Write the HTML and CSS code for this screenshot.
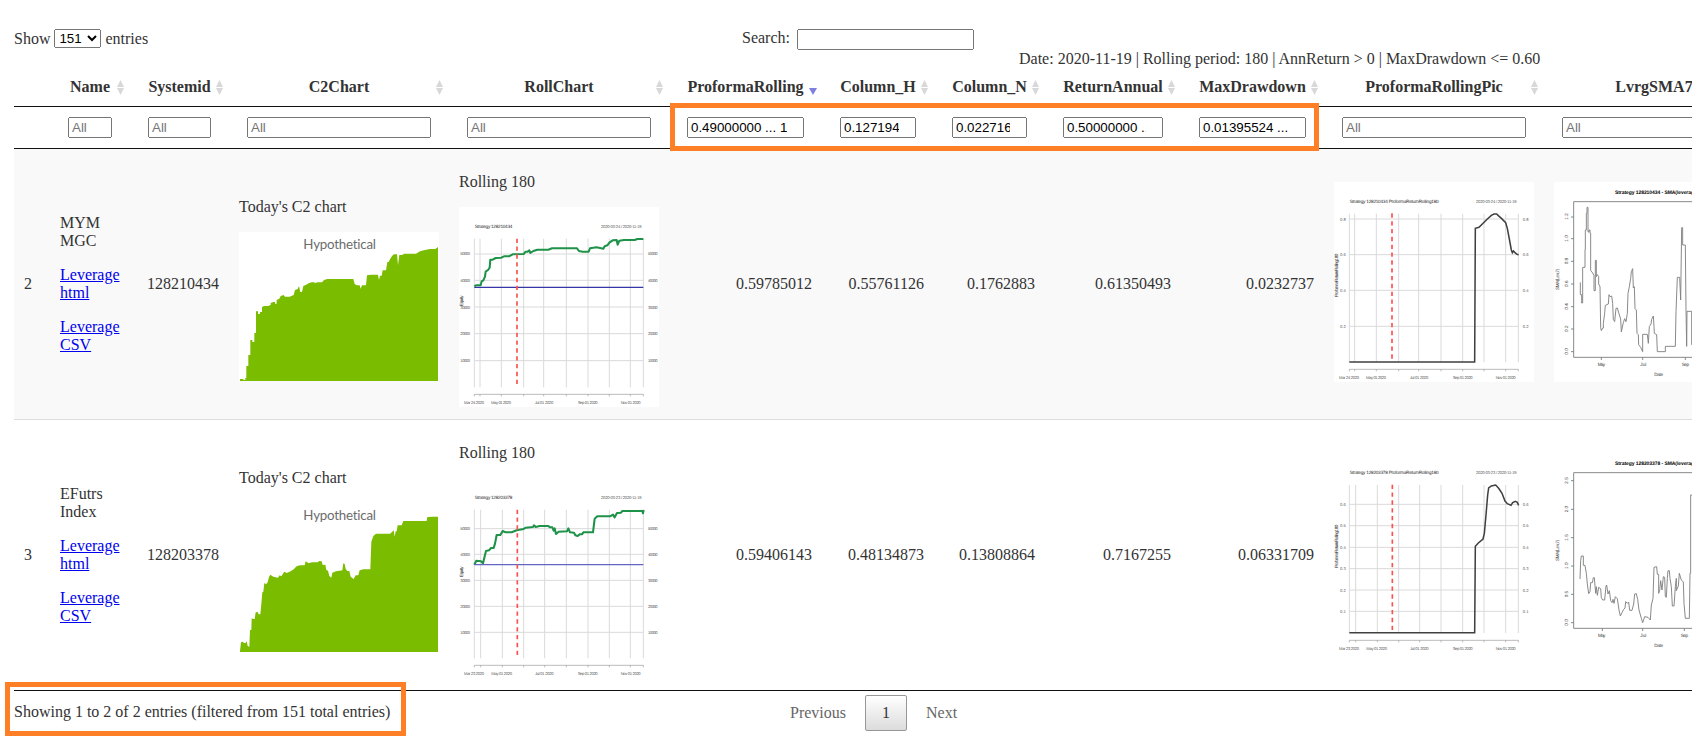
FILE: index.html
```html
<!DOCTYPE html>
<html lang="en">
<head>
<meta charset="utf-8">
<title>Strategies</title>
<link rel="stylesheet" href="styles.css">
</head>
<body>
<div class="toolbar">
  <label class="length">Show <select><option>151</option></select> entries</label>
  <label class="search">Search:<input type="search"></label>
  <div class="caption">Date: 2020-11-19 | Rolling period: 180 | AnnReturn &gt; 0 | MaxDrawdown &lt;= 0.60</div>
</div>
<table class="grid">
  <colgroup><col class="c-idx"><col class="c-name"><col class="c-sys"><col class="c-pic"><col class="c-pic"><col class="c-pr"><col class="c-h"><col class="c-n"><col class="c-ret"><col class="c-dd"><col class="c-pic"><col class="c-pic"></colgroup>
  <thead>
    <tr class="titles">
      <th></th><th class="sort">Name</th><th class="sort">Systemid</th><th class="sort">C2Chart</th><th class="sort">RollChart</th><th class="sort desc">ProformaRolling</th><th class="sort">Column_H</th><th class="sort">Column_N</th><th class="sort">ReturnAnnual</th><th class="sort">MaxDrawdown</th><th class="sort">ProformaRollingPic</th><th class="sort">LvrgSMA7</th>
    </tr>
    <tr class="filters">
      <td></td>
      <td><input type="search" placeholder="All"></td>
      <td><input type="search" placeholder="All"></td>
      <td><input type="search" placeholder="All"></td>
      <td><input type="search" placeholder="All"></td>
      <td><input type="search" value="0.49000000 ... 1"></td>
      <td><input type="search" value="0.127194 ... 1"></td>
      <td><input type="search" value="0.02271600 ... 1"></td>
      <td><input type="search" value="0.50000000 ... 1"></td>
      <td><input type="search" value="0.01395524 ... 1"></td>
      <td><input type="search" placeholder="All"></td>
      <td><input type="search" placeholder="All"></td>
    </tr>
  </thead>
  <tbody>
    <tr class="odd">
      <td>2</td>
      <td>MYM MGC<p><a href="#">Leverage html</a></p><a href="#">Leverage CSV</a></td>
      <td class="num">128210434</td>
      <td><p>Today's C2 chart</p>
        <svg class="area" viewBox="717 246 600 447">
          <rect x="717" y="246" width="600" height="447" fill="#fff"/>
          <path class="fill" d="M720 693V687H730V690H736V684H739V648H745V615H751V570H757V576H763V549H768V484H774V492H780V486H786V471L792 468H804L812 465V459L820 456H825V461H830V450L838 446L842 438L851 435L855 440H869L881 435L885 420L893 417L897 408L901 426H906L910 408L917 405L926 400L935 397H944V400L952 397H966L972 390L982 387H1060L1064 402L1070 406H1079L1082 416L1086 406H1098L1101 376L1113 374H1134L1137 390L1140 377H1145L1148 361H1158L1162 336H1166L1170 328L1176 318L1182 313H1191L1194 346L1198 315H1206L1213 311H1248L1260 304L1275 300L1290 297H1306L1314 291V693Z"/>
          <text class="hypo" x="910" y="297" textLength="218">Hypothetical</text>
        </svg></td>
      <td><p>Rolling 180</p>
        <svg class="plot" viewBox="57 141 600 600">
          <rect x="57" y="141" width="600" height="600" fill="#fff"/>
          <path class="gl" d="M103 236V682M120 236V682M184 236V682M251 236V682M311 236V682M379 236V682M444 236V682M508 236V682M571 236V682M610 236V682M103 282H610M103 361H610M103 441H610M103 521H610M103 602H610"/>
          <path class="ax" d="M103 703H610M103 703v6M120 703v6M184 703v6M251 703v6M311 703v6M379 703v6M444 703v6M508 703v6M571 703v6M610 703v6"/>
          <path class="equity" d="M103 379L108 376H122L125 364L130 361L135 350L137 335L144 330L149 323L151 299H158L167 294L184 293L192 289H207L218 283L251 282L257 275H263L268 271L271 279L280 273L292 269H325L336 265H411L417 273L428 275H446L450 265L470 262L490 266L494 259L502 256L508 248L518 241L530 240L533 254L538 242L552 240H584L592 237H610"/>
          <path class="base" d="M103 382H610"/>
          <path class="split" d="M231 236V682"/>
          <g class="tx"><text class="b" x="104" y="203" textLength="113">Strategy 128210434</text><text x="483" y="203" textLength="122">2020-03-24 / 2020-11-19</text>
          <text x="61" y="286" textLength="29">50000</text><text x="61" y="366" textLength="29">40000</text><text x="61" y="446" textLength="29">30000</text><text x="61" y="526" textLength="29">20000</text><text x="61" y="606" textLength="29">10000</text>
          <text x="624" y="286" textLength="29">50000</text><text x="624" y="366" textLength="29">40000</text><text x="624" y="446" textLength="29">30000</text><text x="624" y="526" textLength="29">20000</text><text x="624" y="606" textLength="29">10000</text>
          <text x="72" y="733" textLength="60">Mar 24 2020</text><text x="153" y="733" textLength="60">May 01 2020</text><text x="284" y="733" textLength="56">Jul 01 2020</text><text x="413" y="733" textLength="60">Sep 01 2020</text><text x="542" y="733" textLength="60">Nov 01 2020</text>
          <text class="b" transform="translate(69 438)rotate(-90)" textLength="32">Equity</text></g>
        </svg></td>
      <td class="num">0.59785012</td><td class="num">0.55761126</td><td class="num">0.1762883</td><td class="num">0.61350493</td><td class="num">0.0232737</td>
      <td>
        <svg class="plot" viewBox="42 36 600 600">
          <rect x="42" y="36" width="600" height="600" fill="#fff"/>
          <path class="gl" d="M88 131V577M104 131V577M169 131V577M236 131V577M296 131V577M363 131V577M428 131V577M492 131V577M557 131V577M595 131V577M88 147H595M88 254H595M88 361H595M88 469H595"/>
          <path class="ax" d="M88 598H595M88 598v6M104 598v6M169 598v6M236 598v6M296 598v6M363 598v6M428 598v6M492 598v6M557 598v6M595 598v6"/>
          <path class="roll" d="M88 576H464L466 175L477 172L487 162L499 150L514 136L522 132H530L535 137L545 146L557 158L562 175L568 207L574 240L577 248L580 243L585 248L591 253L596 254"/>
          <path class="split" d="M216 130V577"/>
          <g class="tx"><text class="b" x="89" y="98" textLength="267">Strategy 128210434 ProformaReturnRolling180</text><text x="468" y="98" textLength="122">2020-03-24 / 2020-11-19</text>
          <text x="60" y="152">0.8</text><text x="60" y="259">0.6</text><text x="60" y="366">0.4</text><text x="60" y="474">0.2</text><text x="608" y="152">0.8</text><text x="608" y="259">0.6</text><text x="608" y="366">0.4</text><text x="608" y="474">0.2</text>
          <text x="57" y="628" textLength="60">Mar 24 2020</text><text x="138" y="628" textLength="60">May 01 2020</text><text x="269" y="628" textLength="56">Jul 01 2020</text><text x="398" y="628" textLength="60">Sep 01 2020</text><text x="527" y="628" textLength="60">Nov 01 2020</text>
          <text class="b" transform="translate(53 381)rotate(-90)" textLength="130">ProformaReturnRolling180</text></g>
        </svg></td>
      <td>
        <svg class="plot" viewBox="702 36 600 600">
          <rect x="702" y="36" width="600" height="600" fill="#fff"/>
          <path class="box" d="M761 95H1270V562H761ZM761 141h-8M761 206h-8M761 274h-8M761 342h-8M761 410h-8M761 477h-8M761 545h-8M844 562v8M968 562v8M1096 562v8"/>
          <path class="sma" d="M781 337V374H785V399H788V292H795V238H796V180H799V130H801V112H804V186H807V180H810V190H812V301L818 309L822 317V362H826V271H829V320L832 314L836 320V342L840 350L842 473L844 482L848 474H850V460L854 430L856 406L865 402L867 374L870 380L875 378L878 400L880 448L884 455L888 415L892 414L897 431L902 447L904 486L910 458L914 446L918 455L922 430L924 370L928 350L932 326L934 305L938 296L940 354L943 350L945 416L949 420L951 490L955 494L956 524L962 532L968 545V493H982L985 520L988 470L993 462L995 448L1000 438L1002 470L1003 490L1010 494L1012 545H1036V529H1066L1068 425L1072 322H1079L1082 390L1085 173H1088V225H1096L1098 420L1100 529L1101 424H1115V524H1130V400H1150V300H1180V480H1220V545H1250"/>
          <g class="tx dark"><text class="t" x="885" y="73" textLength="262">Strategy 128210434 - SMA(leverage,7)</text>
          <text class="v" transform="translate(745 149)rotate(-90)">1.2</text><text class="v" transform="translate(745 215)rotate(-90)">1.0</text><text class="v" transform="translate(745 283)rotate(-90)">0.8</text><text class="v" transform="translate(745 351)rotate(-90)">0.6</text><text class="v" transform="translate(745 419)rotate(-90)">0.4</text><text class="v" transform="translate(745 486)rotate(-90)">0.2</text><text class="v" transform="translate(745 554)rotate(-90)">0.0</text>
          <text class="v" transform="translate(716 360)rotate(-90)" textLength="64">SMA(Lev,7)</text>
          <text class="v" x="833" y="589" textLength="22">May</text><text class="v" x="961" y="589">Jul</text><text class="v" x="1085" y="589" textLength="22">Sep</text><text class="v" x="1003" y="618" textLength="26">Date</text></g>
        </svg></td>
    </tr>
    <tr class="even">
      <td>3</td>
      <td>EFutrs Index<p><a href="#">Leverage html</a></p><a href="#">Leverage CSV</a></td>
      <td class="num">128203378</td>
      <td><p>Today's C2 chart</p>
        <svg class="area" viewBox="717 249 600 447">
          <path class="fill" d="M720 696V693L723 667L728 665L732 669H737L740 663L743 678L748 680L750 630H754L755 595L760 597H764L767 577L773 576L776 583H781L784 552L787 517L790 515L793 489L798 493L803 487L807 471L811 464L820 470L834 473L839 466L844 469L853 455L860 459L872 454L881 448L890 439L900 436H914L917 424L926 430L936 427H953L958 423L965 424L968 435L976 434L979 450L984 452L988 468L994 473L997 458L1008 454L1027 451L1030 430L1034 432L1037 447L1042 453H1048L1052 470L1061 477L1067 466H1075L1079 451L1090 448H1111L1114 365L1120 348L1128 341H1170L1176 336L1181 331L1184 350L1187 334H1190L1193 316H1205L1210 303H1280L1282 291L1298 290H1314V696Z"/>
          <text class="hypo" x="910" y="300" textLength="218">Hypothetical</text>
        </svg></td>
      <td><p>Rolling 180</p>
        <svg class="plot" viewBox="57 144 600 600">
          <path class="gl" d="M103 239V685M122 239V685M187 239V685M251 239V685M314 239V685M379 239V685M444 239V685M508 239V685M571 239V685M610 239V685M103 296H610M103 373H610M103 451H610M103 529H610M103 607H610"/>
          <path class="ax" d="M103 706H610M103 706v6M122 706v6M187 706v6M251 706v6M314 706v6M379 706v6M444 706v6M508 706v6M571 706v6M610 706v6"/>
          <path class="equity" d="M103 404L109 392L123 394L129 400L138 363L147 361L153 354H161L165 341L170 315H181L188 303L197 307H215L230 301L251 297L257 293L279 291L282 286L287 291L299 288H325L330 292H337L341 302L344 295L348 312L356 305L381 304L385 295L390 307L402 308L406 316L413 318L419 313H426L430 307H459L464 266L472 259H510L519 254L524 262L531 249L543 248L547 243H607L609 250L611 240"/>
          <path class="base light" d="M103 404H610"/>
          <path class="split" d="M232 239V685"/>
          <g class="tx"><text class="b" x="104" y="206" textLength="113">Strategy 128203378</text><text x="483" y="206" textLength="122">2020-03-23 / 2020-11-19</text>
          <text x="61" y="301" textLength="29">50000</text><text x="61" y="378" textLength="29">40000</text><text x="61" y="456" textLength="29">30000</text><text x="61" y="534" textLength="29">20000</text><text x="61" y="611" textLength="29">10000</text>
          <text x="624" y="301" textLength="29">50000</text><text x="624" y="378" textLength="29">40000</text><text x="624" y="456" textLength="29">30000</text><text x="624" y="534" textLength="29">20000</text><text x="624" y="611" textLength="29">10000</text>
          <text x="72" y="736" textLength="60">Mar 23 2020</text><text x="154" y="736" textLength="62">May 01 2020</text><text x="285" y="736" textLength="56">Jul 01 2020</text><text x="413" y="736" textLength="60">Sep 01 2020</text><text x="542" y="736" textLength="60">Nov 01 2020</text>
          <text class="b" transform="translate(69 441)rotate(-90)" textLength="32">Equity</text></g>
        </svg></td>
      <td class="num">0.59406143</td><td class="num">0.48134873</td><td class="num">0.13808864</td><td class="num">0.7167255</td><td class="num">0.06331709</td>
      <td>
        <svg class="plot" viewBox="42 39 600 600">
          <path class="gl" d="M88 135V579M107 135V579M172 135V579M236 135V579M299 135V579M363 135V579M428 135V579M492 135V579M557 135V579M595 135V579M88 193H595M88 257H595M88 322H595M88 386H595M88 450H595M88 514H595"/>
          <path class="ax" d="M88 601H595M88 601v6M107 601v6M172 601v6M236 601v6M299 601v6M363 601v6M428 601v6M492 601v6M557 601v6M595 601v6"/>
          <path class="roll" d="M88 578H464L466 319L475 309L489 297L493 280L498 225L503 165L506 144L514 138L527 135L536 145L546 160L555 183L562 191L573 196L578 188L586 184L592 187L596 196"/>
          <path class="split" d="M217 134V579"/>
          <g class="tx"><text class="b" x="89" y="101" textLength="267">Strategy 128203378 ProformaReturnRolling180</text><text x="468" y="101" textLength="122">2020-03-23 / 2020-11-19</text>
          <text x="60" y="198">0.6</text><text x="60" y="262">0.5</text><text x="60" y="327">0.4</text><text x="60" y="391">0.3</text><text x="60" y="455">0.2</text><text x="60" y="519">0.1</text><text x="608" y="198">0.6</text><text x="608" y="262">0.5</text><text x="608" y="327">0.4</text><text x="608" y="391">0.3</text><text x="608" y="455">0.2</text><text x="608" y="519">0.1</text>
          <text x="57" y="631" textLength="60">Mar 23 2020</text><text x="139" y="631" textLength="62">May 01 2020</text><text x="270" y="631" textLength="56">Jul 01 2020</text><text x="398" y="631" textLength="60">Sep 01 2020</text><text x="527" y="631" textLength="60">Nov 01 2020</text>
          <text class="b" transform="translate(53 384)rotate(-90)" textLength="130">ProformaReturnRolling180</text></g>
        </svg></td>
      <td>
        <svg class="plot" viewBox="702 39 600 600">
          <path class="box" d="M761 98H1270V565H761ZM761 122h-8M761 208h-8M761 293h-8M761 378h-8M761 463h-8M761 548h-8M847 565v8M968 565v8M1093 565v8"/>
          <path class="sma" d="M780 417L782 362L784 348H790V376H795L799 400L802 432L806 461L810 455L812 428H817L820 413H823L827 460L829 440L832 466L836 442L842 446L844 473L848 480H854L858 438L860 435L864 462L868 452L872 482L876 488L879 478L882 490L886 470L892 476L897 510L901 528L906 518L911 508L915 504L917 485L922 490L926 486L929 511H936L941 492L944 462L949 461L953 478L957 510L964 535L968 548L974 530L984 532L991 540L994 495L999 475L1002 382L1010 380L1012 403H1016V460L1019 452L1022 422L1026 450L1030 410L1034 412L1036 470L1039 472L1042 415L1044 392H1048L1050 415L1054 440L1057 498H1062L1066 440L1069 415V452L1075 438L1078 400L1084 420L1090 426L1092 490L1096 535H1108L1110 400H1112V165H1126V300H1150V480H1190V380H1230V520H1260"/>
          <g class="tx dark"><text class="t" x="885" y="76" textLength="262">Strategy 128203378 - SMA(leverage,7)</text>
          <text class="v" transform="translate(745 131)rotate(-90)">2.5</text><text class="v" transform="translate(745 217)rotate(-90)">2.0</text><text class="v" transform="translate(745 302)rotate(-90)">1.5</text><text class="v" transform="translate(745 387)rotate(-90)">1.0</text><text class="v" transform="translate(745 472)rotate(-90)">0.5</text><text class="v" transform="translate(745 557)rotate(-90)">0.0</text>
          <text class="v" transform="translate(716 363)rotate(-90)" textLength="64">SMA(Lev,7)</text>
          <text class="v" x="834" y="592" textLength="22">May</text><text class="v" x="961" y="592">Jul</text><text class="v" x="1082" y="592" textLength="22">Sep</text><text class="v" x="1003" y="621" textLength="26">Date</text></g>
        </svg></td>
    </tr>
  </tbody>
</table>
<div class="footer">
  <div class="info">Showing 1 to 2 of 2 entries (filtered from 151 total entries)</div>
  <div class="pager"><a>Previous</a><a class="current">1</a><a>Next</a></div>
</div>
<div class="mark mark-filters"></div>
<div class="mark mark-info"></div>
</body>
</html>
```

FILE: styles.css
```css
* { box-sizing: border-box; }
html { overflow: hidden; }
body {
  position: relative;
  width: 1692px;
  height: 750px;
  margin: 0;
  padding-left: 14px;
  overflow: hidden;
  background: #fff;
  color: #333;
  font: 16px/18px "Liberation Serif", "Times New Roman", serif;
}
input, select { font: 13.333px "Liberation Sans", Arial, sans-serif; }
.toolbar {
  display: grid;
  grid-template-columns: 728px 277px auto;
  height: 68px;
  padding-top: 29px;
}
.length { display: flex; align-items: center; gap: 4px; height: 19px; }
.length select { width: 47px; height: 19px; }
.search { display: flex; align-items: flex-start; height: 21px; }
.search input { width: 177px; height: 21px; margin: 0 0 0 7px; }
.caption { margin-top: 21px; white-space: nowrap; }

.grid {
  width: 1750px;
  table-layout: fixed;
  border-collapse: separate;
  border-spacing: 0;
  border-bottom: 1px solid #111;
}
.c-idx { width: 36px; }
.c-name { width: 80px; }
.c-sys { width: 99px; }
.c-pic { width: 220px; }
.c-pr { width: 153px; }
.c-h { width: 112px; }
.c-n { width: 111px; }
.c-ret { width: 136px; }
.c-dd { width: 143px; }
.titles th {
  height: 39px;
  padding: 10px 0;
  border-bottom: 1px solid #111;
  white-space: nowrap;
}
.sort { position: relative; }
.sort::before, .sort::after {
  content: "";
  position: absolute;
  right: 6px;
  width: 7px;
  height: 7px;
  background: #d8d8d8;
}
.sort::before { top: 12px; clip-path: polygon(50% 0, 100% 100%, 0 100%); }
.sort::after { top: 20px; clip-path: polygon(0 0, 100% 0, 50% 100%); }
.desc::before { display: none; }
.desc::after { right: 5px; width: 8px; background: #7f7fe0; }
.filters td { height: 42px; padding: 10px 18px; border-bottom: 1px solid #111; }
.filters input { display: block; width: 100%; height: 21px; }
tbody td { height: 270px; padding: 8px 10px; vertical-align: middle; }
tbody p { margin: 16px 0; }
.odd td { background: #f9f9f9; }
.even td { height: 271px; border-top: 1px solid #ddd; }
.num { text-align: right; }
.grid a { color: #0000ee; text-decoration: underline; }

svg { vertical-align: baseline; }
.area { width: 200px; height: 149px; margin-bottom: 1px; }
.plot { width: 200px; height: 200px; }
.fill { fill: #7abc00; }
.hypo { font: 40px Lato, sans-serif; font-variant-ligatures: none; fill: #6c6c6c; }
.gl, .ax, .box, .sma, .equity, .base, .roll, .split { fill: none; }
.gl { stroke: #dadada; stroke-width: 3; }
.ax { stroke: #999; stroke-width: 2; }
.box { stroke: #777; stroke-width: 2.6; }
.sma { stroke: #808080; stroke-width: 2.8; }
.equity { stroke: #1e9248; stroke-width: 6.2; stroke-linejoin: round; }
.base { stroke: #3636a8; stroke-width: 3.4; }
.light { stroke: #6565c4; stroke-width: 4; }
.roll { stroke: #404040; stroke-width: 4.6; }
.split { stroke: #ff5050; stroke-width: 5; stroke-dasharray: 13 10.5; }
.tx { font: 12.5px "Liberation Sans", Arial, sans-serif; fill: #5a5a5a; text-rendering: geometricPrecision; }
.tx .b { font-size: 14px; fill: #2a2a2a; }
.tx .t { font-size: 15px; font-weight: bold; fill: #000; }
.tx .v { font-size: 14px; fill: #3c3c3c; }

.footer { display: grid; grid-template-columns: 757px auto; }
.info { padding-top: 12px; }
.pager { display: flex; gap: 2px; padding: 4px 0 0 2px; }
.pager a {
  height: 36px;
  padding: 8px 16px;
  border: 1px solid transparent;
  border-radius: 2px;
  color: #666;
}
.pager .current {
  border-color: #979797;
  background: linear-gradient(#fff, #dcdcdc);
  color: #333;
}
.mark { position: absolute; border: 5px solid #ff7f27; }
.mark-filters { left: 670px; top: 103px; width: 649px; height: 48px; }
.mark-info { left: 5px; top: 682px; width: 401px; height: 54px; }
```
